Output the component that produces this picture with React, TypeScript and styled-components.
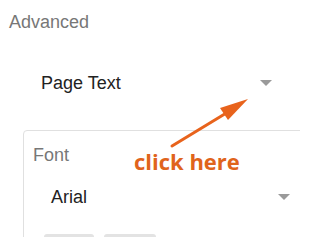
import React from 'react';
import styled, { createGlobalStyle } from 'styled-components';

const GlobalStyle = createGlobalStyle`
  body {
    margin: 0;
    background: #fff;
    font-family: 'Liberation Sans', Arial, sans-serif;
    overflow: hidden;
  }
`;

const Page = styled.div`
  position: relative;
  width: 300px;
  height: 237px;
  overflow: hidden;
  padding-top: 12px;
  box-sizing: border-box;
`;

const SectionTitle = styled.div`
  padding-left: 9px;
  font-size: 18px;
  line-height: 20px;
  color: #777;
`;

const SelectRow = styled.div<{ $top: number; $left: number; $width: number }>`
  display: flex;
  align-items: center;
  justify-content: space-between;
  box-sizing: border-box;
  margin-top: ${(p) => p.$top}px;
  padding-left: ${(p) => p.$left}px;
  width: ${(p) => p.$width}px;
  height: 20px;
  font-size: 18px;
  line-height: 20px;
  color: #222;
`;

const Caret = styled.span`
  width: 0;
  height: 0;
  border-left: 6px solid transparent;
  border-right: 6px solid transparent;
  border-top: 6px solid #9a9a9a;
`;

const Panel = styled.div`
  margin: 37px 0 0 23px;
  width: 360px;
  padding: 14px 0 0 9px;
  border: 1px solid #e0e0e0;
  border-radius: 4px;
  box-sizing: border-box;
`;

const FieldLabel = styled.div`
  font-size: 18px;
  line-height: 20px;
  color: #777;
`;

const ButtonRow = styled.div`
  display: flex;
  gap: 10px;
  margin: 27px 0 0 11px;
`;

const StyleButton = styled.div<{ $width: number }>`
  width: ${(p) => p.$width}px;
  height: 30px;
  background: #e3e3e3;
  border-radius: 3px;
`;

const Callout = styled.div`
  position: absolute;
  left: 134px;
  top: 150px;
  font-family: 'Open Sans', 'Liberation Sans', sans-serif;
  font-weight: 700;
  font-size: 22px;
  line-height: 22px;
  color: #e0641c;
  white-space: nowrap;
`;

const Pointer = styled.svg`
  position: absolute;
  left: 160px;
  top: 90px;
`;

const App = () => {
  return (
    <>
      <GlobalStyle />
      <Page>
        <SectionTitle>Advanced</SectionTitle>
        <SelectRow $top={41} $left={41} $width={272}>
          <span>Page Text</span>
          <Caret />
        </SelectRow>
        <Panel>
          <FieldLabel>Font</FieldLabel>
          <SelectRow $top={22} $left={18} $width={257}>
            <span>Arial</span>
            <Caret />
          </SelectRow>
          <ButtonRow>
            <StyleButton $width={50} />
            <StyleButton $width={52} />
          </ButtonRow>
        </Panel>
        <Pointer width="100" height="65" viewBox="0 0 100 65">
          <line x1="12" y1="56" x2="68" y2="22" stroke="#e8631c" strokeWidth="3" strokeLinecap="round" />
          <polygon points="88,9 60,18 68,30" fill="#e8631c" />
        </Pointer>
        <Callout>click here</Callout>
      </Page>
    </>
  );
};

export default App;
